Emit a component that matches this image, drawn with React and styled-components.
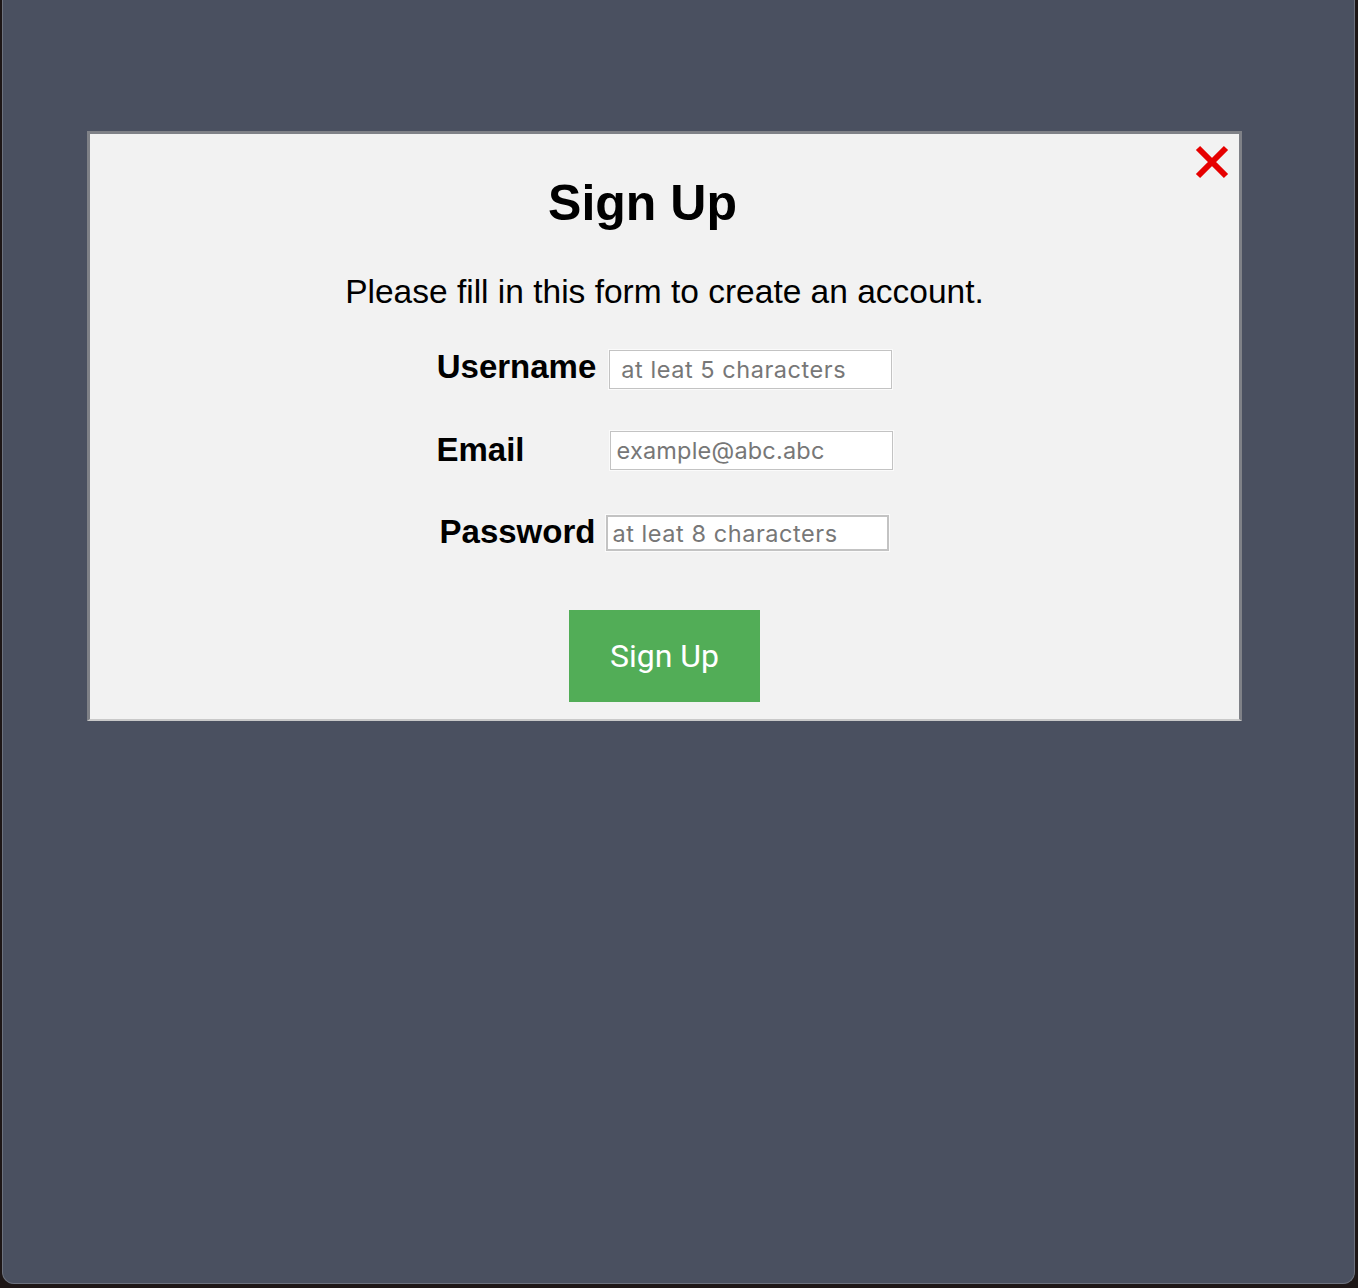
import React from "react";
import styled, { createGlobalStyle } from "styled-components";

const GlobalStyle = createGlobalStyle`
  html, body {
    margin: 0;
    padding: 0;
    background: #1d1616;
  }
  body {
    font-family: "Liberation Sans", Arial, sans-serif;
  }
`;

const Window = styled.div`
  box-sizing: border-box;
  height: 1284px;
  margin: 0 3px 0 2px;
  padding: 131px 112px 0 84px;
  background: #4a5060;
  border: 1px solid #6d727e;
  border-top: none;
  border-radius: 0 0 12px 12px;
`;

const Modal = styled.div`
  box-sizing: border-box;
  height: 590px;
  background: #f2f2f2;
  border: 3px solid #7f8187;
  border-bottom: 2px solid #c9c9c9;
  display: flex;
  flex-direction: column;
  align-items: center;
`;

const TitleRow = styled.div`
  align-self: stretch;
  display: flex;
  align-items: flex-start;
`;

const Title = styled.h1`
  flex: 1;
  margin: 39px 0 0;
  text-align: center;
  font-size: 50px;
  line-height: 60px;
  font-weight: bold;
  color: #000;
`;

const Close = styled.button`
  width: 34px;
  margin: 11px 10px 0 0;
  padding: 0;
  border: none;
  background: none;
  cursor: pointer;
  display: flex;
`;

const Subtitle = styled.p`
  margin: 39px 0 0;
  font-size: 33.5px;
  line-height: 40px;
  color: #000;
`;

const Row = styled.div`
  display: flex;
  align-items: flex-start;
  margin-top: ${(p) => p.$top}px;
`;

const Label = styled.label`
  font-size: 33px;
  line-height: 33px;
  font-weight: bold;
  color: #000;
  padding-top: ${(p) => p.$drop || 0}px;
  margin-right: ${(p) => p.$space}px;
`;

const Input = styled.input`
  box-sizing: border-box;
  width: 283px;
  height: ${(p) => p.$h}px;
  margin: 0;
  padding: 0 0 0 ${(p) => p.$pad}px;
  background: #fff;
  border: ${(p) => p.$bw}px solid #c3c3c3;
  box-shadow: 0 0 0 1px #fbfbfb;
  font-family: Inter, "Noto Sans", sans-serif;
  font-size: 23.5px;
  letter-spacing: ${(p) => p.$ls}px;
  color: #222;
  outline: none;

  &::placeholder {
    color: #777;
  }
`;

const SubmitButton = styled.button`
  width: 191px;
  height: 92px;
  margin-top: 59px;
  border: none;
  background: #52ad57;
  color: #fff;
  font-family: Roboto, "Noto Sans", sans-serif;
  font-size: 32px;
  cursor: pointer;
`;

const CloseIcon = () => (
  <svg width="34" height="34" viewBox="0 0 34 34">
    <path d="M3 3 L31 31 M31 3 L3 31" stroke="#e60000" strokeWidth="6" />
  </svg>
);

export default function App() {
  return (
    <>
      <GlobalStyle />
      <Window>
        <Modal>
          <TitleRow>
            <Title>Sign Up</Title>
            <Close aria-label="close">
              <CloseIcon />
            </Close>
          </TitleRow>
          <Subtitle>Please fill in this form to create an account.</Subtitle>
          <Row $top={38}>
            <Label $space={13}>Username</Label>
            <Input $h={39} $pad={11} $bw={1} $ls={0.55} placeholder="at leat 5 characters" />
          </Row>
          <Row $top={42}>
            <Label $space={85} $drop={2}>Email</Label>
            <Input $h={39} $pad={6} $bw={1} $ls={0.2} placeholder="example@abc.abc" />
          </Row>
          <Row $top={45}>
            <Label $space={11}>Password</Label>
            <Input $h={36} $pad={4} $bw={2} $ls={0.55} type="password" placeholder="at leat 8 characters" />
          </Row>
          <SubmitButton>Sign Up</SubmitButton>
        </Modal>
      </Window>
    </>
  );
}
